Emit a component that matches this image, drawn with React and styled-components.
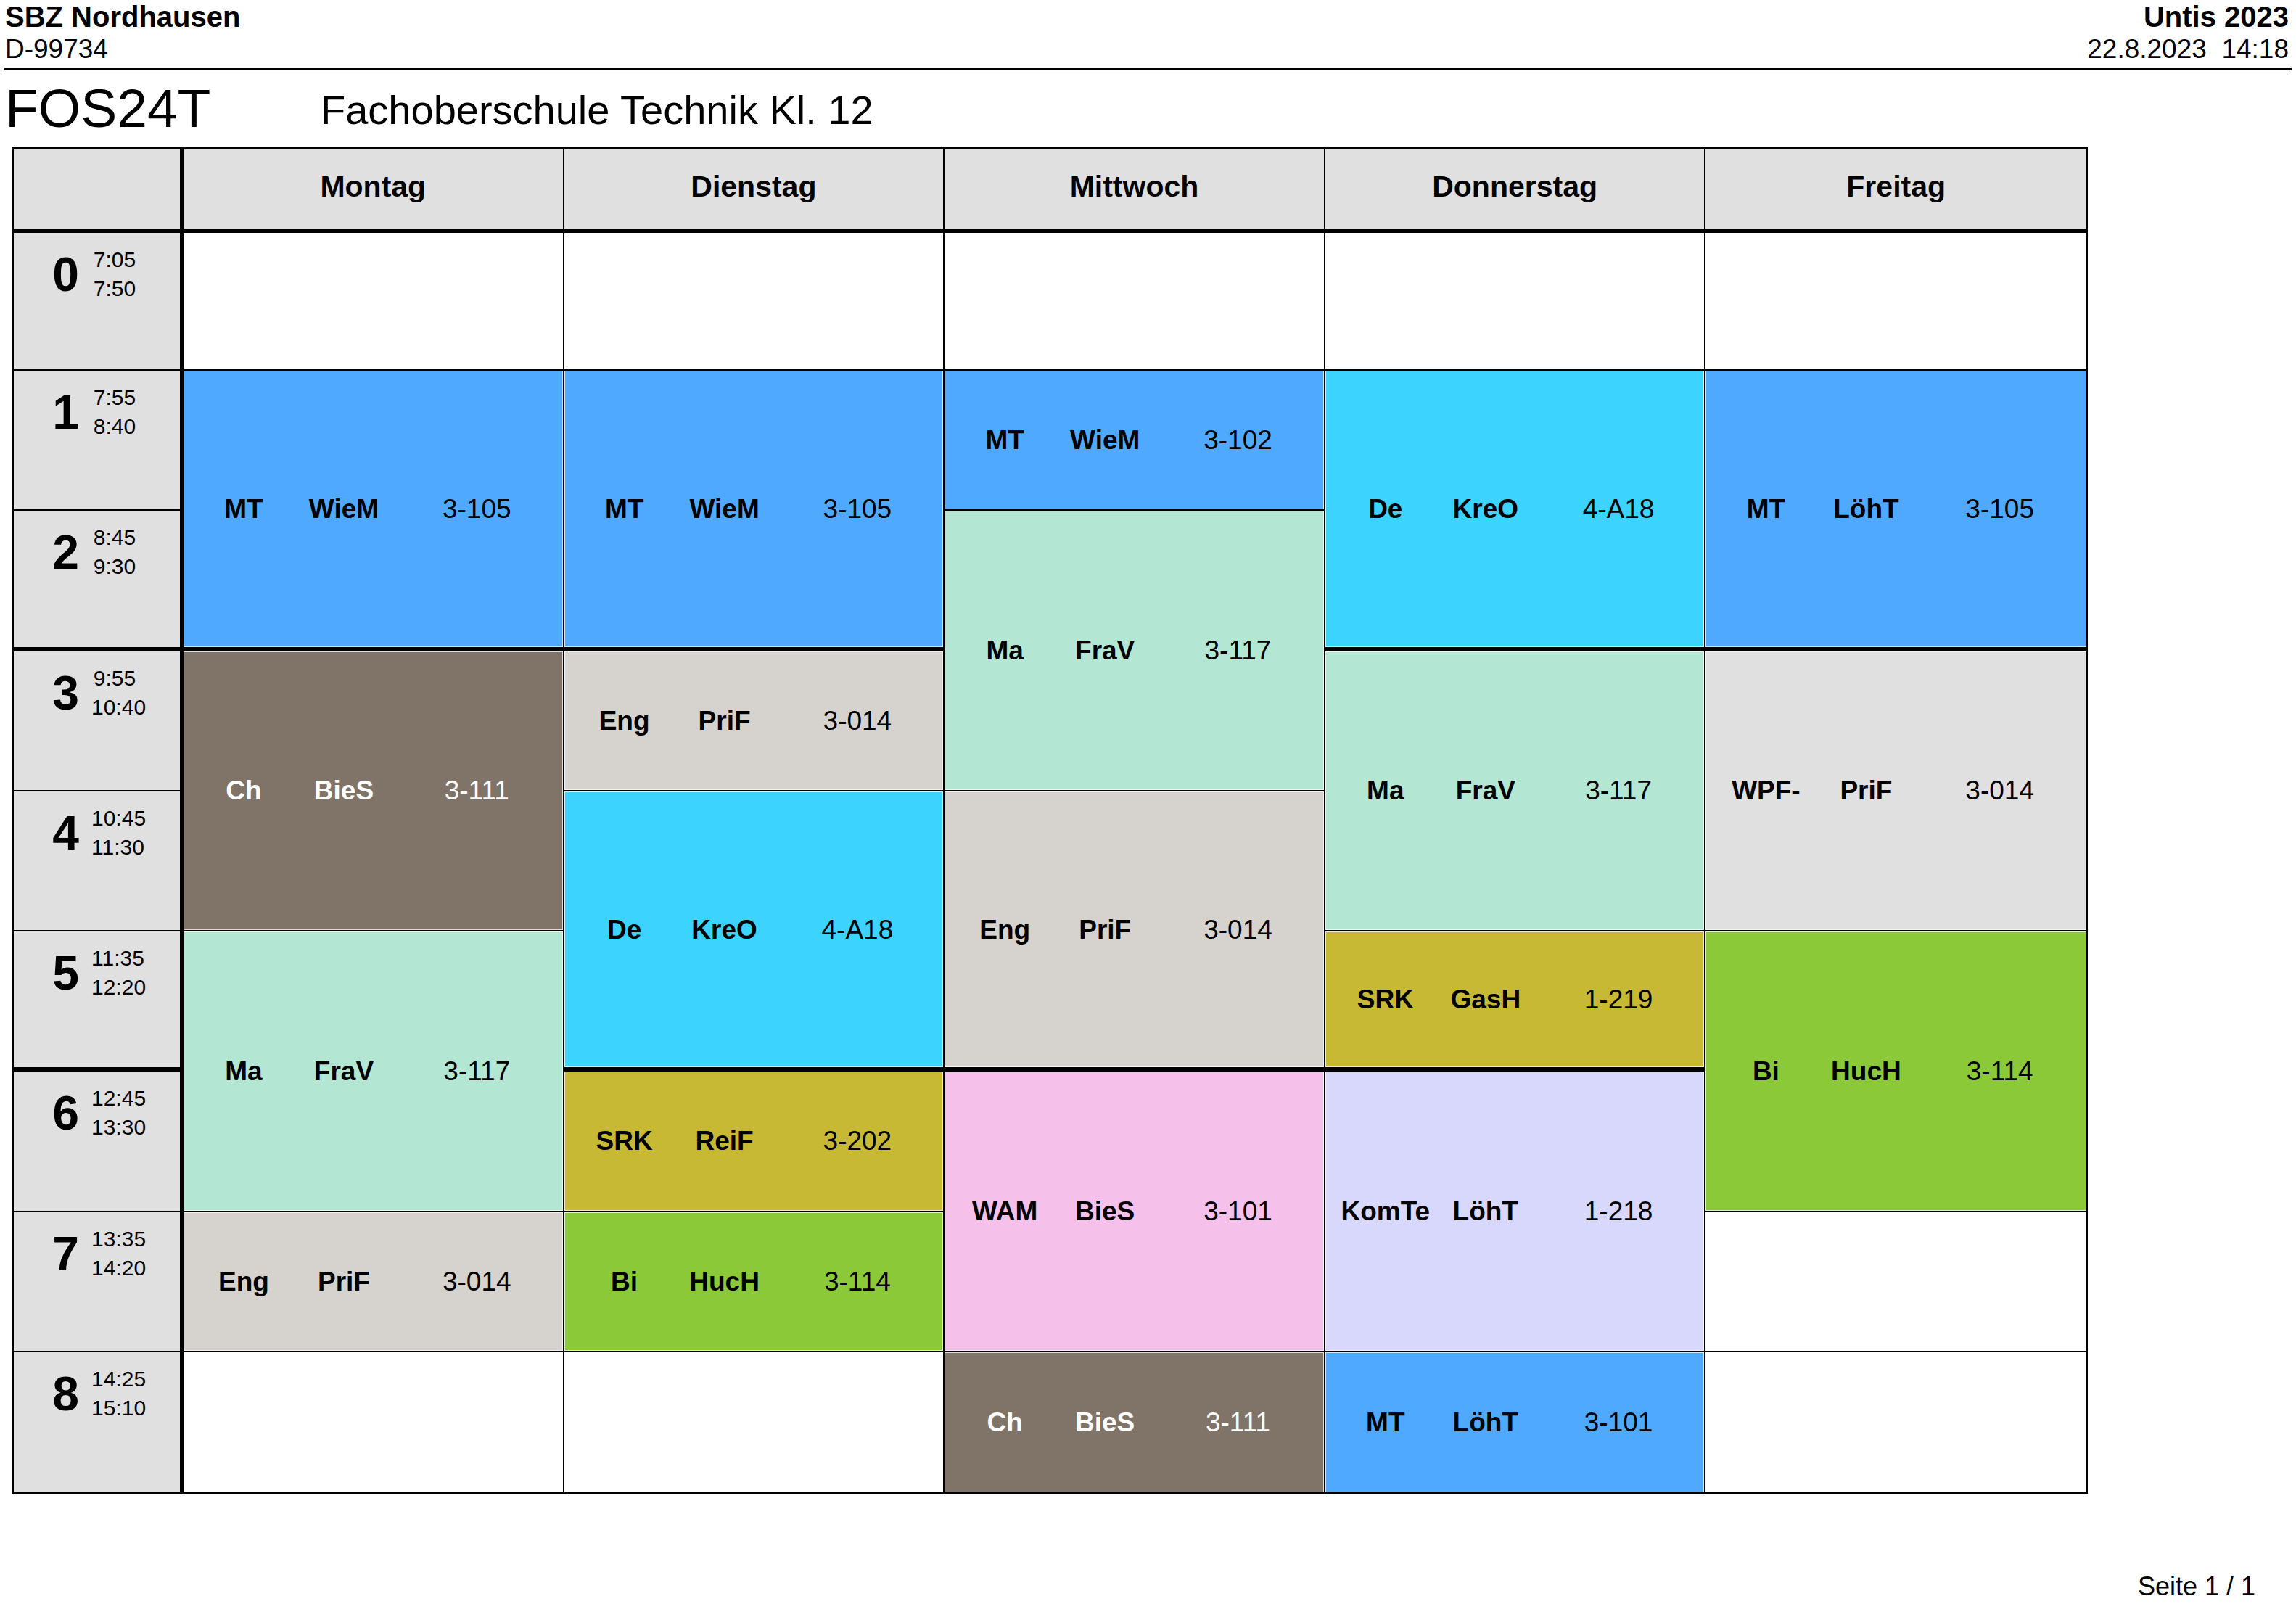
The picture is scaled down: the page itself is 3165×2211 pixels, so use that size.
import React from 'react';
import styled, { createGlobalStyle } from 'styled-components';

const GlobalStyle = createGlobalStyle`
  html, body {
    margin: 0;
    padding: 0;
    background: #fff;
  }
  body {
    font-family: "Liberation Sans", Arial, sans-serif;
    color: #000;
  }
`;

const Page = styled.div`
  width: 3165px;
  min-height: 2211px;
  display: flex;
  flex-direction: column;
`;

const Header = styled.header`
  display: flex;
  justify-content: space-between;
  margin: 0 6px;
  padding: 0 4px 4px 1px;
  border-bottom: 3px solid #000;
`;

const HeaderSide = styled.div`
  display: flex;
  flex-direction: column;
  align-items: ${p => (p.$right ? 'flex-end' : 'flex-start')};
`;

const HeaderTitle = styled.div`
  font-size: 40px;
  font-weight: bold;
  line-height: 46px;
`;

const HeaderSub = styled.div`
  font-size: 37px;
  line-height: 44px;
  white-space: pre;
`;

const TitleRow = styled.div`
  display: flex;
  align-items: flex-start;
  margin: 15px 0 0 7px;
`;

const ClassName = styled.div`
  width: 435px;
  font-size: 75px;
  line-height: 1;
`;

const ClassTitle = styled.div`
  margin-top: 12px;
  font-size: 56px;
  line-height: 1;
`;

const Table = styled.div`
  display: grid;
  grid-template-columns: 234px repeat(5, minmax(0, 1fr));
  grid-template-rows: 116px 190px repeat(8, minmax(0, 1fr));
  width: 2861px;
  height: 1856px;
  margin: 16px 0 0 17px;
  border: 2px solid #000;
  box-sizing: border-box;
`;

const GridCell = styled.div`
  box-sizing: border-box;
  min-width: 0;
  grid-column: ${p => p.$col};
  grid-row: ${p => `${p.$row} / span ${p.$span || 1}`};
  border-bottom: ${p => p.$bottom || 0}px solid #000;
  border-right: ${p => p.$right || 0}px solid #000;
`;

const Corner = styled(GridCell)`
  background: #e0e0e0;
`;

const DayHead = styled(GridCell)`
  display: flex;
  align-items: center;
  justify-content: center;
  padding-bottom: 7px;
  background: #e0e0e0;
  font-size: 41px;
  font-weight: bold;
  line-height: 1;
`;

const TimeCell = styled(GridCell)`
  display: flex;
  align-items: flex-start;
  padding: 17px 0 0 36px;
  background: #e0e0e0;
`;

const PeriodRow = styled.div`
  display: flex;
  align-items: center;
`;

const PeriodNo = styled.div`
  width: 71px;
  text-align: center;
  font-size: 66px;
  font-weight: bold;
  line-height: 80px;
`;

const Times = styled.div`
  width: 64px;
  text-align: center;
  font-size: 30px;
  line-height: 40px;
`;

const Empty = styled(GridCell)`
  background: #fff;
`;

const Lesson = styled(GridCell)`
  display: flex;
  align-items: center;
  background: ${p => p.$bg};
  box-shadow: inset 0 0 0 1px rgba(255, 255, 255, 0.75);
  color: ${p => (p.$light ? '#fff' : '#000')};
`;

const LessonLine = styled.div`
  display: grid;
  grid-template-columns: 166px 110px 1fr;
  flex: 0 0 calc(100% + 10px);
  font-size: 37px;
  line-height: 1;
  white-space: nowrap;
`;

const Slot = styled.span`
  text-align: center;
  font-weight: ${p => (p.$bold ? 'bold' : 'normal')};
`;

const Footer = styled.div`
  display: flex;
  justify-content: flex-end;
  margin-top: 110px;
  padding-right: 56px;
  font-size: 36px;
  line-height: 1;
`;

const days = ['Montag', 'Dienstag', 'Mittwoch', 'Donnerstag', 'Freitag'];

const periods = [
  ['0', '7:05', '7:50'],
  ['1', '7:55', '8:40'],
  ['2', '8:45', '9:30'],
  ['3', '9:55', '10:40'],
  ['4', '10:45', '11:30'],
  ['5', '11:35', '12:20'],
  ['6', '12:45', '13:30'],
  ['7', '13:35', '14:20'],
  ['8', '14:25', '15:10'],
];

const colors = {
  MT: '#4ea9ff',
  De: '#3cd4ff',
  Ma: '#b3e7d3',
  Eng: '#d6d3ce',
  Ch: '#807468',
  SRK: '#c8b934',
  Bi: '#8bc938',
  WAM: '#f5c1ea',
  KomTe: '#d8d8fd',
  'WPF-': '#e0e0e0',
};

// [from, to, subject, teacher, room]
const schedule = [
  [
    [1, 2, 'MT', 'WieM', '3-105'],
    [3, 4, 'Ch', 'BieS', '3-111'],
    [5, 6, 'Ma', 'FraV', '3-117'],
    [7, 7, 'Eng', 'PriF', '3-014'],
  ],
  [
    [1, 2, 'MT', 'WieM', '3-105'],
    [3, 3, 'Eng', 'PriF', '3-014'],
    [4, 5, 'De', 'KreO', '4-A18'],
    [6, 6, 'SRK', 'ReiF', '3-202'],
    [7, 7, 'Bi', 'HucH', '3-114'],
  ],
  [
    [1, 1, 'MT', 'WieM', '3-102'],
    [2, 3, 'Ma', 'FraV', '3-117'],
    [4, 5, 'Eng', 'PriF', '3-014'],
    [6, 7, 'WAM', 'BieS', '3-101'],
    [8, 8, 'Ch', 'BieS', '3-111'],
  ],
  [
    [1, 2, 'De', 'KreO', '4-A18'],
    [3, 4, 'Ma', 'FraV', '3-117'],
    [5, 5, 'SRK', 'GasH', '1-219'],
    [6, 7, 'KomTe', 'LöhT', '1-218'],
    [8, 8, 'MT', 'LöhT', '3-101'],
  ],
  [
    [1, 2, 'MT', 'LöhT', '3-105'],
    [3, 4, 'WPF-', 'PriF', '3-014'],
    [5, 6, 'Bi', 'HucH', '3-114'],
  ],
];

const lineBelow = p => (p === 8 ? 0 : p === 2 || p === 5 ? 6 : 2);

const DayColumn = ({ day, lessons }) => {
  const col = day + 2;
  const right = day === 4 ? 0 : 2;
  const blocks = [];
  let p = 0;
  while (p < 9) {
    const lesson = lessons.find(l => l[0] === p);
    if (lesson) {
      const [from, to, subject, teacher, room] = lesson;
      blocks.push(
        <Lesson
          key={p}
          $col={col}
          $row={from + 2}
          $span={to - from + 1}
          $bottom={lineBelow(to)}
          $right={right}
          $bg={colors[subject]}
          $light={subject === 'Ch'}
        >
          <LessonLine>
            <Slot $bold>{subject}</Slot>
            <Slot $bold>{teacher}</Slot>
            <Slot>{room}</Slot>
          </LessonLine>
        </Lesson>
      );
      p = to + 1;
    } else {
      blocks.push(
        <Empty key={p} $col={col} $row={p + 2} $bottom={lineBelow(p)} $right={right} />
      );
      p += 1;
    }
  }
  return blocks;
};

const App = () => (
  <Page>
    <GlobalStyle />
    <Header>
      <HeaderSide>
        <HeaderTitle>SBZ Nordhausen</HeaderTitle>
        <HeaderSub>D-99734</HeaderSub>
      </HeaderSide>
      <HeaderSide $right>
        <HeaderTitle>Untis 2023</HeaderTitle>
        <HeaderSub>{'22.8.2023  14:18'}</HeaderSub>
      </HeaderSide>
    </Header>

    <TitleRow>
      <ClassName>FOS24T</ClassName>
      <ClassTitle>Fachoberschule Technik Kl. 12</ClassTitle>
    </TitleRow>

    <Table>
      <Corner $col={1} $row={1} $bottom={5} $right={5} />
      {days.map((d, i) => (
        <DayHead key={d} $col={i + 2} $row={1} $bottom={5} $right={i === 4 ? 0 : 2}>
          {d}
        </DayHead>
      ))}
      {periods.map(([no, start, end], i) => (
        <TimeCell key={no} $col={1} $row={i + 2} $bottom={lineBelow(i)} $right={5}>
          <PeriodRow>
            <PeriodNo>{no}</PeriodNo>
            <Times>
              <div>{start}</div>
              <div>{end}</div>
            </Times>
          </PeriodRow>
        </TimeCell>
      ))}
      {schedule.map((lessons, i) => (
        <DayColumn key={days[i]} day={i} lessons={lessons} />
      ))}
    </Table>

    <Footer>Seite 1 / 1</Footer>
  </Page>
);

export default App;
